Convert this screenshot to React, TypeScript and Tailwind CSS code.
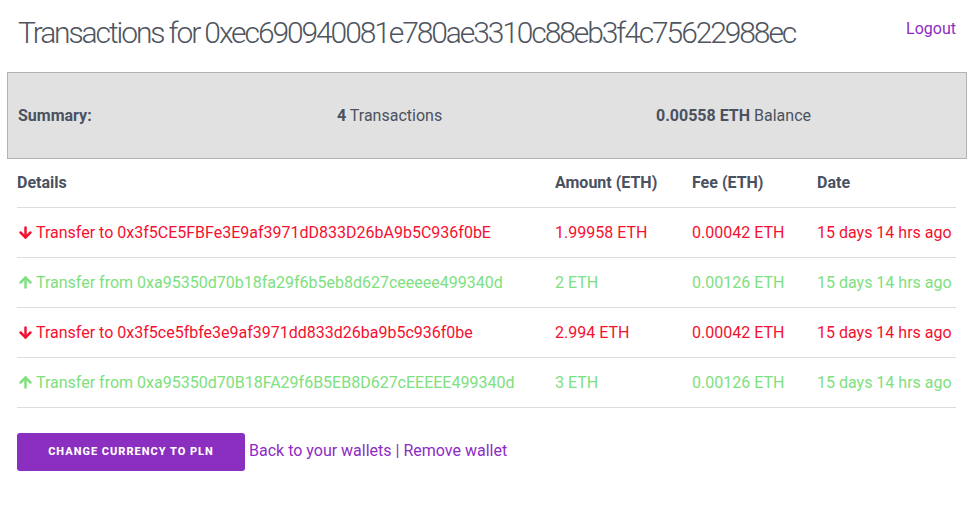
import React from 'react';
import { ArrowDown, ArrowUp } from 'lucide-react';

type Tx = { dir: 'in' | 'out'; addr: string; amount: string; fee: string; date: string };

const txs: Tx[] = [
  { dir: 'out', addr: '0x3f5CE5FBFe3E9af3971dD833D26bA9b5C936f0bE', amount: '1.99958 ETH', fee: '0.00042 ETH', date: '15 days 14 hrs ago' },
  { dir: 'in', addr: '0xa95350d70b18fa29f6b5eb8d627ceeeee499340d', amount: '2 ETH', fee: '0.00126 ETH', date: '15 days 14 hrs ago' },
  { dir: 'out', addr: '0x3f5ce5fbfe3e9af3971dd833d26ba9b5c936f0be', amount: '2.994 ETH', fee: '0.00042 ETH', date: '15 days 14 hrs ago' },
  { dir: 'in', addr: '0xa95350d70B18FA29f6B5EB8D627cEEEEE499340d', amount: '3 ETH', fee: '0.00126 ETH', date: '15 days 14 hrs ago' },
];

const App: React.FC = () => {
  return (
    <div className="w-[974px] h-[505px] bg-white font-['Roboto',sans-serif] text-[#4a5160] overflow-hidden">
      <div className="flex justify-between items-start pl-[18px] pr-[18px] pt-[14px] h-[72px]">
        <h1 className="text-[30px] leading-[38px] font-light tracking-[-2.1px] text-[#4f5560]">
          Transactions for 0xec690940081e780ae3310c88eb3f4c75622988ec
        </h1>
        <a className="text-[16px] text-[#8e2bc4] mt-[3px]">Logout</a>
      </div>

      <div className="mx-[7px] h-[87px] bg-[#e1e1e1] border border-[#b3b3b3] grid grid-cols-[319px_319px_1fr] items-center px-[10px] text-[16px]">
        <div className="font-bold">Summary:</div>
        <div><span className="font-bold">4</span> Transactions</div>
        <div><span className="font-bold">0.00558 ETH</span> Balance</div>
      </div>

      <div className="ml-[17px] mr-[18px] text-[16px]">
        <div className="grid grid-cols-[538px_137px_125px_1fr] h-[49px] items-center font-bold border-b border-[#dddddd]">
          <div>Details</div>
          <div>Amount (ETH)</div>
          <div>Fee (ETH)</div>
          <div>Date</div>
        </div>
        {txs.map((t, i) => (
          <div
            key={i}
            className={`grid grid-cols-[538px_137px_125px_1fr] h-[50px] items-center border-b border-[#dddddd] ${
              t.dir === 'out' ? 'text-[#f5102f]' : 'text-[#7ee07e]'
            }`}
          >
            <div className="flex items-center gap-[2px]">
              {t.dir === 'out' ? <ArrowDown size={17} strokeWidth={3.5} /> : <ArrowUp size={17} strokeWidth={3.5} />}
              <span>{t.dir === 'out' ? 'Transfer to ' : 'Transfer from '}{t.addr}</span>
            </div>
            <div>{t.amount}</div>
            <div>{t.fee}</div>
            <div className="whitespace-nowrap">{t.date}</div>
          </div>
        ))}
      </div>

      <div className="flex items-center gap-[4px] ml-[17px] mt-[25px]">
        <button className="w-[228px] h-[38px] rounded-[3px] bg-[#8a2fbf] text-white text-[11px] font-extrabold tracking-[1px] uppercase">
          Change currency to PLN
        </button>
        <div className="text-[16px] text-[#8e2bc4] -mt-[3px]">
          <a>Back to your wallets</a> | <a>Remove wallet</a>
        </div>
      </div>
    </div>
  );
};

export default App;
